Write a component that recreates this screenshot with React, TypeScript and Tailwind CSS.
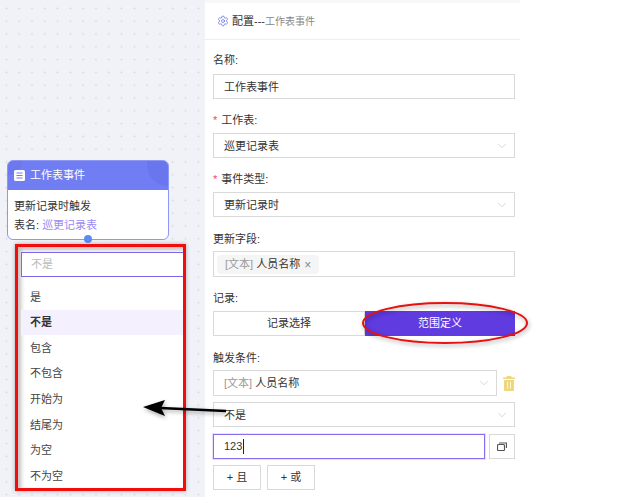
import type { ReactNode } from "react"
import { ChevronDown, Settings } from "lucide-react"

const options = ["是", "不是", "包含", "不包含", "开始为", "结尾为", "为空", "不为空"]

function Label({ text, required }: { text: string; required?: boolean }) {
  return (
    <div className="h-[14px] text-[11px] leading-[14px] text-[#333]">
      {required && <span className="mr-1 text-[#f5455c]">*</span>}
      {text}:
    </div>
  )
}

function Select({ children, className = "" }: { children: ReactNode; className?: string }) {
  return (
    <div className={`flex h-[25px] items-center justify-between border border-[#d9d9d9] bg-white pl-[10px] pr-[5px] text-[11px] text-[#333] ${className}`}>
      <span className="pt-px">{children}</span>
      <ChevronDown size={14} strokeWidth={1} className="text-[#bbb]" />
    </div>
  )
}

function Tag() {
  return (
    <>
      <span className="text-[#999]">[文本]</span> 人员名称
    </>
  )
}

export default function App() {
  return (
    <div className="relative flex h-[497px] w-[640px] overflow-hidden bg-white font-['Liberation_Sans','Noto_Sans_CJK_SC',sans-serif]">
      {/* Canvas */}
      <div className="h-full w-[205px] bg-[#f0f2f7] bg-[radial-gradient(#d6d7dd_0.8px,transparent_1.1px)] bg-[size:12.8px_12.8px] bg-[position:0_2px]" />

      {/* Config panel */}
      <div className="h-full w-[315px] bg-white">
        <div className="flex h-[40px] items-center gap-[3px] border-b border-t-[3px] border-b-[#eee] border-t-[#f8f8f9] pl-[12px]">
          <Settings size={12} strokeWidth={1.6} className="text-[#6b78e8]" />
          <span className="text-[11px] text-[#333]">
            配置---<span className="text-[10px] text-[#888]">工作表事件</span>
          </span>
        </div>

        <div className="flex flex-col pl-[8px] pr-[5px] pt-[13px]">
          <Label text="名称" />
          <div className="mt-[7px] flex h-[25px] items-center border border-[#d9d9d9] pl-[10px] pt-px text-[11px] text-[#333]">工作表事件</div>

          <div className="mt-[14px]"><Label text="工作表" required /></div>
          <Select className="mt-[6px]">巡更记录表</Select>

          <div className="mt-[14px]"><Label text="事件类型" required /></div>
          <Select className="mt-[6px]">更新记录时</Select>

          <div className="mt-[15px]"><Label text="更新字段" /></div>
          <div className="mt-[5px] flex h-[26px] items-center border border-[#d9d9d9] pl-[3px]">
            <span className="flex h-[19px] items-center gap-[4px] rounded-sm bg-[#f5f5f5] px-[8px] pt-px text-[11px] text-[#333]">
              <span><Tag /></span>
              <span className="text-[12px] leading-none text-[#888]">×</span>
            </span>
          </div>

          <div className="mt-[14px]"><Label text="记录" /></div>
          <div className="mt-[6px] flex h-[25px] text-[11px]">
            <div className="flex w-[152px] items-center justify-center border border-[#d9d9d9] text-[#333]">记录选择</div>
            <div className="flex flex-1 items-center justify-center bg-[#5f3be0] text-white">范围定义</div>
          </div>

          <div className="mt-[15px]"><Label text="触发条件" /></div>
          <div className="mt-[5px] flex items-center gap-[6px]">
            <Select className="flex-1 !h-[26px]"><Tag /></Select>
            <svg width="12" height="15" viewBox="0 0 12 15" className="shrink-0">
              <path d="M4 0h4l1 1.5h3V3H0V1.500h3z" fill="#efd77f" />
              <path d="M1 4h10v10a1 1 0 0 1-1 1H2a1 1 0 0 1-1-1z" fill="#efd77f" />
              <path d="M4.500 6v6.500M7.500 6v6.500" stroke="#fff5d0" />
            </svg>
          </div>
          <Select className="mt-[6px]">不是</Select>
          <div className="mt-[7px] flex gap-[4px]">
            <div className="flex h-[25px] flex-1 items-center border border-[#8a6cf0] pl-[10px] text-[11px] text-[#333] shadow-[0_0_0_1px_#e6e0fb]">
              123<span className="ml-px h-[15px] w-px bg-[#222]" />
            </div>
            <div className="flex h-[25px] w-[26px] items-center justify-center border border-[#d9d9d9]">
              <svg width="10" height="9" viewBox="0 0 10 9" fill="none" stroke="#555" strokeWidth="1.2">
                <rect x="0.5" y="2.500" width="7" height="6" rx="1" />
                <path d="M2 1h7.500v5" />
              </svg>
            </div>
          </div>
          <div className="mt-[6px] flex gap-[6px] text-[11px] text-[#333]">
            <div className="flex h-[25px] w-[48px] items-center justify-center border border-[#d9d9d9]">+ 且</div>
            <div className="flex h-[25px] w-[48px] items-center justify-center border border-[#d9d9d9]">+ 或</div>
          </div>
        </div>
      </div>

      {/* Node */}
      <div className="absolute left-[7px] top-[160px] h-[80px] w-[162px] overflow-hidden rounded-[6px] border border-[#8f97f5] bg-white">
        <div className="relative flex h-[29px] items-center gap-[5px] overflow-hidden bg-[#717df3] pl-[6px] text-[11px] text-white">
          <span className="absolute -left-[14px] -top-[14px] h-[28px] w-[28px] rounded-full bg-[#6c78ee]" />
          <span className="absolute -right-[21px] -top-[17px] h-[42px] w-[42px] rounded-full bg-[#6a76ee]" />
          <svg width="11" height="11" viewBox="0 0 11 11" className="relative">
            <rect width="11" height="11" rx="1.500" fill="#fff" />
            <path d="M2.500 3h6M2.500 5.500h6M2.500 8h6" stroke="#717df3" />
          </svg>
          <span className="relative">工作表事件</span>
        </div>
        <div className="pl-[6px] pt-[7px] text-[11px] leading-[19px] text-[#333]">
          <div>更新记录时触发</div>
          <div>表名: <span className="text-[#9a8cf2]">巡更记录表</span></div>
        </div>
      </div>
      <span className="absolute left-[84px] top-[235px] h-[8px] w-[8px] rounded-full bg-[#5b8cf5]" />

      {/* Dropdown */}
      <div className="absolute left-[15px] top-[244px] h-[247px] w-[171px] border-[3px] border-[#f20d0d] bg-white shadow-[inset_3px_3px_4px_rgba(0,0,0,0.25),0_0_4px_rgba(0,0,0,0.3)]">
        <div className="ml-[3px] mt-[5px] flex h-[25px] items-center border border-r-0 border-[#7d66e8] bg-white pl-[9px] text-[11px] text-[#bbb]">不是</div>
        <div className="mt-[3px] pt-[4px]">
          {options.map((o) => (
            <div
              key={o}
              className={`ml-[3px] flex h-[25.6px] items-center pl-[9px] text-[11px] ${o === "不是" ? "bg-[#f5f0fd] font-bold text-[#333]" : "text-[#444]"}`}
            >
              {o}
            </div>
          ))}
        </div>
      </div>

      {/* Annotations */}
      <svg className="absolute left-0 top-0" width="640" height="497" fill="none">
        <g className="drop-shadow-[1px_2px_2px_rgba(0,0,0,0.35)]">
          <ellipse cx="445" cy="323" rx="82" ry="20" stroke="#e81010" strokeWidth="2" />
          <path d="M226 411L160 408" stroke="#000" strokeWidth="2.500" />
          <path d="M143 407L165 400L161 408L165 416Z" fill="#000" />
        </g>
      </svg>
    </div>
  )
}
